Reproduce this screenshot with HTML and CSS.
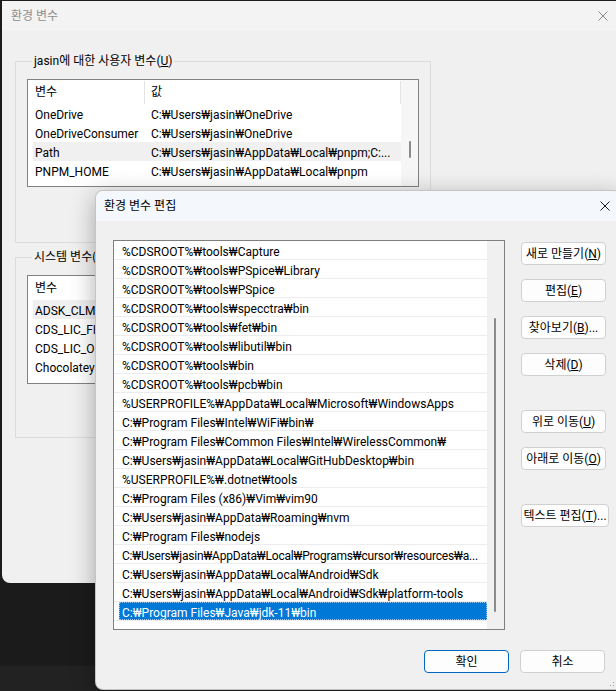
FILE: index.html
```html
<!DOCTYPE html>
<html lang="ko">
<head>
<meta charset="utf-8">
<title>환경 변수</title>
<link rel="stylesheet" href="styles.css">
</head>
<body>
<div class="win back">
  <div class="titlebar">
    <span class="title">환경 변수</span>
    <svg class="xicon" width="10" height="10" viewBox="0 0 10 10"><path d="M0.5 0.5L9.5 9.5M9.5 0.5L0.5 9.5" stroke="#8a8a8a" stroke-width="1"/></svg>
  </div>
  <div class="bclient">
    <fieldset class="group g1">
      <legend>jasin에 대한 사용자 변수(<u>U</u>)</legend>
      <div class="lv lv1">
        <div class="lv-main">
          <div class="lv-head"><div class="h1">변수</div><div class="h2">값</div></div>
          <div class="lrow"><div class="c1">OneDrive</div><div class="c2">C:₩Users₩jasin₩OneDrive</div></div>
          <div class="lrow"><div class="c1">OneDriveConsumer</div><div class="c2">C:₩Users₩jasin₩OneDrive</div></div>
          <div class="lrow hl"><div class="c1">Path</div><div class="c2">C:₩Users₩jasin₩AppData₩Local₩pnpm;C:...</div></div>
          <div class="lrow"><div class="c1">PNPM_HOME</div><div class="c2">C:₩Users₩jasin₩AppData₩Local₩pnpm</div></div>
        </div>
        <div class="lv-scroll"><div class="thumb t1"></div></div>
      </div>
    </fieldset>
    <fieldset class="group g2">
      <legend>시스템 변수(<u>S</u>)</legend>
      <div class="lv lv2">
        <div class="lv-main">
          <div class="lv-head"><div class="h1">변수</div><div class="h2"></div></div>
          <div class="lrow hl"><div class="c1">ADSK_CLM</div><div class="c2"></div></div>
          <div class="lrow"><div class="c1">CDS_LIC_FI</div><div class="c2"></div></div>
          <div class="lrow"><div class="c1">CDS_LIC_O</div><div class="c2"></div></div>
          <div class="lrow"><div class="c1">Chocolatey</div><div class="c2"></div></div>
        </div>
        <div class="lv-scroll"></div>
      </div>
    </fieldset>
  </div>
</div>

<div class="win front">
  <div class="titlebar ftitle">
    <span class="title dark">환경 변수 편집</span>
    <svg class="xicon" width="10" height="10" viewBox="0 0 10 10"><path d="M0.5 0.5L9.5 9.5M9.5 0.5L0.5 9.5" stroke="#1a1a1a" stroke-width="1"/></svg>
  </div>
  <div class="fclient">
    <div class="fmain">
      <div class="flist">
        <div class="flist-main">
          <div class="frow"><div class="cell">%CDSROOT%₩tools₩Capture</div></div>
          <div class="frow"><div class="cell">%CDSROOT%₩tools₩PSpice₩Library</div></div>
          <div class="frow"><div class="cell">%CDSROOT%₩tools₩PSpice</div></div>
          <div class="frow"><div class="cell">%CDSROOT%₩tools₩specctra₩bin</div></div>
          <div class="frow"><div class="cell">%CDSROOT%₩tools₩fet₩bin</div></div>
          <div class="frow"><div class="cell">%CDSROOT%₩tools₩libutil₩bin</div></div>
          <div class="frow"><div class="cell">%CDSROOT%₩tools₩bin</div></div>
          <div class="frow"><div class="cell">%CDSROOT%₩tools₩pcb₩bin</div></div>
          <div class="frow"><div class="cell">%USERPROFILE%₩AppData₩Local₩Microsoft₩WindowsApps</div></div>
          <div class="frow"><div class="cell">C:₩Program Files₩Intel₩WiFi₩bin₩</div></div>
          <div class="frow"><div class="cell">C:₩Program Files₩Common Files₩Intel₩WirelessCommon₩</div></div>
          <div class="frow"><div class="cell">C:₩Users₩jasin₩AppData₩Local₩GitHubDesktop₩bin</div></div>
          <div class="frow"><div class="cell">%USERPROFILE%₩.dotnet₩tools</div></div>
          <div class="frow"><div class="cell">C:₩Program Files (x86)₩Vim₩vim90</div></div>
          <div class="frow"><div class="cell">C:₩Users₩jasin₩AppData₩Roaming₩nvm</div></div>
          <div class="frow"><div class="cell">C:₩Program Files₩nodejs</div></div>
          <div class="frow"><div class="cell tight">C:₩Users₩jasin₩AppData₩Local₩Programs₩cursor₩resources₩a...</div></div>
          <div class="frow"><div class="cell">C:₩Users₩jasin₩AppData₩Local₩Android₩Sdk</div></div>
          <div class="frow"><div class="cell">C:₩Users₩jasin₩AppData₩Local₩Android₩Sdk₩platform-tools</div></div>
          <div class="frow sel"><div class="cell">C:₩Program Files₩Java₩jdk-11₩bin</div></div>
        </div>
        <div class="fscroll"><div class="thumb t2"></div></div>
      </div>
      <div class="btncol">
        <button class="btn">새로 만들기(<u>N</u>)</button>
        <button class="btn">편집(<u>E</u>)</button>
        <button class="btn">찾아보기(<u>B</u>)...</button>
        <button class="btn">삭제(<u>D</u>)</button>
        <button class="btn sep">위로 이동(<u>U</u>)</button>
        <button class="btn">아래로 이동(<u>O</u>)</button>
        <button class="btn sep wide">텍스트 편집(<u>T</u>)...</button>
      </div>
    </div>
    <div class="footer">
      <button class="btn default">확인</button>
      <button class="btn">취소</button>
    </div>
  </div>
  <svg class="grip" width="8" height="8" viewBox="0 0 8 8">
    <rect x="6" y="0" width="1" height="1" fill="#9a9a9a"/>
    <rect x="3" y="3" width="1" height="1" fill="#9a9a9a"/>
    <rect x="6" y="3" width="1" height="1" fill="#9a9a9a"/>
    <rect x="0" y="6" width="1" height="1" fill="#9a9a9a"/>
    <rect x="3" y="6" width="1" height="1" fill="#9a9a9a"/>
    <rect x="6" y="6" width="1" height="1" fill="#9a9a9a"/>
  </svg>
</div>
</body>
</html>
```

FILE: styles.css
```css
html, body {
  margin: 0;
  padding: 0;
}
body {
  width: 616px;
  height: 691px;
  overflow: hidden;
  position: relative;
  background: linear-gradient(#1b1b1b 0, #1b1b1b 665px, #222 666px);
  font-family: Roboto, "Noto Sans CJK KR", sans-serif;
  font-size: 12px;
  color: #000;
}
.win {
  position: absolute;
  box-sizing: border-box;
  overflow: hidden;
}
.back {
  left: 2px;
  top: 1px;
  width: 616px;
  height: 582px;
  background: #f0f0f0;
  border-radius: 0 0 0 8px;
}
.titlebar {
  display: flex;
  align-items: center;
  justify-content: space-between;
  box-sizing: border-box;
}
.back .titlebar {
  height: 30px;
  background: #f3f3f3;
  padding: 0 10px 0 9px;
}
.title {
  color: #8e8e8e;
  line-height: 16px;
}
.title.dark {
  color: #000;
}
.xicon {
  display: block;
}
.bclient {
  padding: 22px 0 0 13px;
}
fieldset.group {
  margin: 0;
  padding: 9px 11px 55px 11px;
  border: 1px solid #dcdcdc;
  width: 416px;
  box-sizing: border-box;
  min-width: 0;
}
fieldset.g2 {
  margin-top: 6px;
  padding-bottom: 53px;
}
legend {
  margin-left: 5px;
  padding: 0 2px;
  line-height: 17px;
}
.lv {
  display: flex;
  width: 392px;
  height: 108px;
  box-sizing: border-box;
  border: 1px solid #828282;
  background: #fff;
}
.lv2 {
  height: 109px;
}
.lv-main {
  width: 373px;
  overflow: hidden;
}
.lv-scroll {
  width: 17px;
  background: #f6f6f6;
  position: relative;
}
.thumb {
  position: absolute;
  width: 2px;
  background: #8a8a8a;
  border-radius: 1px;
}
.t1 {
  left: 8px;
  top: 61px;
  height: 17px;
}
.lv-head {
  display: flex;
  height: 24px;
}
.h1, .h2 {
  box-sizing: border-box;
  line-height: 23px;
  padding-top: 1px;
  height: 24px;
  white-space: nowrap;
  position: relative;
}
.h1 {
  width: 117px;
  padding-left: 7px;
}
.h2 {
  flex: 1;
  padding-left: 6px;
}
.h1::after, .h2::after {
  content: "";
  position: absolute;
  right: 0;
  top: 1px;
  height: 23px;
  width: 1px;
  background: #e3e3e3;
}
.lrow {
  display: flex;
  height: 19px;
  margin-left: 5px;
  white-space: nowrap;
}
.lrow.hl {
  background: #f0f0f0;
}
.lrow .c1, .lrow .c2 {
  box-sizing: border-box;
  height: 19px;
  line-height: 19px;
  padding-top: 2px;
  overflow: hidden;
}
.lrow .c1 {
  width: 112px;
  padding-left: 2px;
}
.lrow .c2 {
  flex: 1;
  padding-left: 6px;
}

.front {
  left: 95px;
  top: 190px;
  width: 526px;
  height: 500px;
  background: #f0f0f0;
  border: 1px solid rgba(0, 0, 0, 0.18);
  border-radius: 8px 8px 0 8px;
  box-shadow: 0 6px 24px rgba(0, 0, 0, 0.32);
}
.ftitle {
  height: 30px;
  background: #f4f7fb;
  padding: 0 10px 0 8px;
}
.fclient {
  padding: 19px 0 0 17px;
}
.fmain {
  display: flex;
  align-items: flex-start;
}
.flist {
  display: flex;
  width: 392px;
  height: 390px;
  box-sizing: border-box;
  border: 1px solid #7f7f7f;
  background: #fff;
}
.flist-main {
  width: 373px;
  overflow: hidden;
}
.frow {
  height: 19px;
  box-sizing: border-box;
  border-bottom: 1px solid #ececec;
  display: flex;
}
.cell {
  flex: 1;
  margin-left: 5px;
  padding-left: 3px;
  box-sizing: border-box;
  height: 18px;
  padding-top: 2px;
  line-height: 18px;
  white-space: nowrap;
  overflow: hidden;
}
.cell.tight {
  letter-spacing: -0.2px;
}
.frow.sel .cell {
  background: #0078d7;
  color: #fff;
  outline: 1px dotted #9cc6ee;
  outline-offset: -1px;
}
.fscroll {
  width: 17px;
  background: #f0f0f0;
  position: relative;
}
.t2 {
  left: 7px;
  top: 77px;
  height: 294px;
}
.btncol {
  margin-left: 16px;
  padding-top: 2px;
  display: flex;
  flex-direction: column;
  gap: 14px;
}
.btn {
  width: 85px;
  height: 23px;
  box-sizing: border-box;
  border: 1px solid #d0d0d0;
  border-radius: 4px;
  background: #fdfdfd;
  font: inherit;
  color: #000;
  padding: 0;
  display: flex;
  align-items: center;
  justify-content: center;
  white-space: nowrap;
  line-height: 16px;
}
.btn.sep {
  margin-top: 20px;
}
.btn.wide {
  width: 88px;
}
.btn.default {
  border-color: #0067c0;
}
.footer {
  display: flex;
  justify-content: flex-end;
  gap: 11px;
  margin-top: 20px;
  padding-right: 15px;
}
.grip {
  position: absolute;
  right: 2px;
  bottom: 2px;
}
```
